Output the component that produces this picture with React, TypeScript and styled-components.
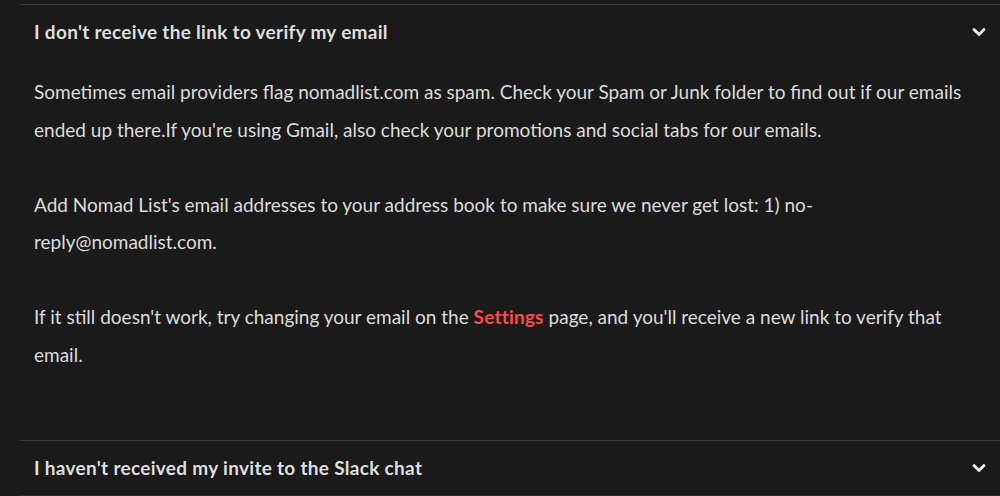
import React, { useState } from 'react';
import styled, { createGlobalStyle } from 'styled-components';

const GlobalStyle = createGlobalStyle`
  html, body {
    margin: 0;
    padding: 0;
    background: #1a1a1a;
  }
  body {
    font-family: Lato, "Noto Sans", "Liberation Sans", sans-serif;
    -webkit-font-smoothing: antialiased;
  }
`;

// Styled Components
const Page = styled.div`
  min-height: 496px;
  padding-top: 4px;
  box-sizing: border-box;
  background: #1a1a1a;
  overflow: hidden;
`;

const List = styled.div`
  margin-left: 20px;
  border-bottom: 1px solid #262a2e;
`;

const Item = styled.div`
  border-top: 1px solid #3a3a3a;
`;

const Question = styled.div`
  display: flex;
  align-items: center;
  justify-content: space-between;
  height: 53px;
  padding: 0 14px 1px;
  cursor: pointer;
`;

const QuestionText = styled.span`
  font-size: 19px;
  font-weight: 700;
  letter-spacing: 0.3px;
  color: #dedede;
`;

const Answer = styled.div`
  padding: 14px 14px 67px;
  font-size: 19px;
  line-height: 37.5px;
  color: #dcdcdc;
`;

const Link = styled.a`
  color: #ff4a45;
  font-weight: 700;
  letter-spacing: 0.2px;
  text-decoration: none;
`;

interface FaqItem {
  question: string;
  answer?: React.ReactNode;
}

const faqs: FaqItem[] = [
  {
    question: "I don't receive the link to verify my email",
    answer: (
      <>
        Sometimes email providers flag nomadlist.com as spam. Check your Spam or Junk folder to find
        out if our emails ended up there.If you're using Gmail, also check your promotions and social
        tabs for our emails.
        <br />
        <br />
        Add Nomad List's email addresses to your address book to make sure we never get lost: 1)
        no-reply@nomadlist.com.
        <br />
        <br />
        If it still doesn't work, try changing your email on the <Link href="#settings">Settings</Link>{' '}
        page, and you'll receive a new link to verify that email.
      </>
    ),
  },
  {
    question: "I haven't received my invite to the Slack chat",
  },
];

const Chevron = () => (
  <svg width="14" height="10" viewBox="0 0 14 10" fill="none">
    <path d="M2 2.5 L7 7.5 L12 2.5" stroke="#f2f2f2" strokeWidth="2.8" strokeLinecap="round" strokeLinejoin="round" />
  </svg>
);

const App: React.FC = () => {
  const [open, setOpen] = useState<number | null>(0);

  return (
    <>
      <GlobalStyle />
      <Page>
        <List>
          {faqs.map((faq, i) => (
            <Item key={faq.question}>
              <Question onClick={() => setOpen(open === i ? null : i)}>
                <QuestionText>{faq.question}</QuestionText>
                <Chevron />
              </Question>
              {open === i && faq.answer && <Answer>{faq.answer}</Answer>}
            </Item>
          ))}
        </List>
      </Page>
    </>
  );
};

export default App;
